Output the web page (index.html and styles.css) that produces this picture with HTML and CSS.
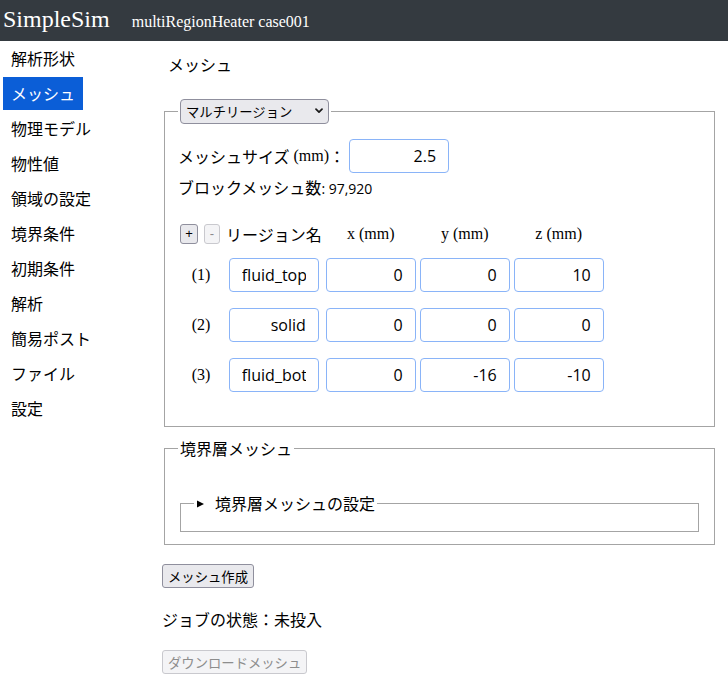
FILE: index.html
```html
<!DOCTYPE html>
<html lang="ja">
<head>
<meta charset="utf-8">
<title>SimpleSim - メッシュ</title>
<link rel="stylesheet" href="styles.css">
</head>
<body>
<header class="topbar">
  <span class="brand">SimpleSim</span>
  <span class="case-name">multiRegionHeater case001</span>
</header>
<div class="layout">
  <nav class="sidebar">
    <a class="nav-item" href="#">解析形状</a>
    <a class="nav-item active" href="#">メッシュ</a>
    <a class="nav-item" href="#">物理モデル</a>
    <a class="nav-item" href="#">物性値</a>
    <a class="nav-item" href="#">領域の設定</a>
    <a class="nav-item" href="#">境界条件</a>
    <a class="nav-item" href="#">初期条件</a>
    <a class="nav-item" href="#">解析</a>
    <a class="nav-item" href="#">簡易ポスト</a>
    <a class="nav-item" href="#">ファイル</a>
    <a class="nav-item" href="#">設定</a>
  </nav>
  <main class="content">
    <div class="page-title">メッシュ</div>

    <fieldset class="group mesh-group">
      <legend class="group-legend">
        <span class="select-wrap">
          <select class="mode-select">
            <option>マルチリージョン</option>
          </select>
          <svg class="chevron" width="8" height="6" viewBox="0 0 8 6" aria-hidden="true"><path d="M1 1.2L4 4.2L7 1.2" fill="none" stroke="#1a1a1a" stroke-width="1.7" stroke-linecap="round" stroke-linejoin="round"/></svg>
        </span>
      </legend>

      <div class="mesh-size-row">
        <span class="jp">メッシュサイズ</span><span class="unit">&nbsp;(mm)</span><span class="jp">：</span>
        <input class="num-input size-input" type="text" value="2.5">
      </div>
      <div class="block-count"><span class="jp">ブロックメッシュ数</span><span class="count-num">: 97,920</span></div>

      <table class="region-table">
        <thead>
          <tr>
            <th class="ctrl-cell"><span class="ctrl-btns"><button class="mini-btn plus" type="button">+</button><button class="mini-btn minus" type="button" disabled>-</button></span></th>
            <th class="jp name-head">リージョン名</th>
            <th>x (mm)</th>
            <th>y (mm)</th>
            <th>z (mm)</th>
          </tr>
        </thead>
        <tbody>
          <tr>
            <td class="idx">(1)</td>
            <td><input class="num-input cell-input" type="text" value="fluid_top"></td>
            <td><input class="num-input cell-input" type="text" value="0"></td>
            <td><input class="num-input cell-input" type="text" value="0"></td>
            <td><input class="num-input cell-input" type="text" value="10"></td>
          </tr>
          <tr>
            <td class="idx">(2)</td>
            <td><input class="num-input cell-input" type="text" value="solid"></td>
            <td><input class="num-input cell-input" type="text" value="0"></td>
            <td><input class="num-input cell-input" type="text" value="0"></td>
            <td><input class="num-input cell-input" type="text" value="0"></td>
          </tr>
          <tr>
            <td class="idx">(3)</td>
            <td><input class="num-input cell-input" type="text" value="fluid_bottom"></td>
            <td><input class="num-input cell-input" type="text" value="0"></td>
            <td><input class="num-input cell-input" type="text" value="-16"></td>
            <td><input class="num-input cell-input" type="text" value="-10"></td>
          </tr>
        </tbody>
      </table>
    </fieldset>

    <fieldset class="group bl-group">
      <legend class="group-legend jp text-legend">境界層メッシュ</legend>
      <fieldset class="group bl-inner">
        <legend class="group-legend jp text-legend">
          <details class="bl-details">
            <summary class="bl-summary"><svg class="disclosure" width="7" height="8" viewBox="0 0 7 8" aria-hidden="true"><path d="M0 0.5L7 4L0 7.5Z" fill="#000"/></svg><span>境界層メッシュの設定</span></summary>
          </details>
        </legend>
      </fieldset>
    </fieldset>

    <button class="btn make-btn" type="button">メッシュ作成</button>
    <div class="job-status jp">ジョブの状態：未投入</div>
    <button class="btn download-btn" type="button" disabled>ダウンロードメッシュ</button>
  </main>
</div>
</body>
</html>
```

FILE: styles.css
```css
* {
  box-sizing: border-box;
}

html,
body {
  margin: 0;
  padding: 0;
}

body {
  font-family: "Liberation Serif", "Noto Sans CJK JP", serif;
  font-size: 16px;
  color: #000;
  background: #fff;
}

.jp {
  font-family: "Noto Sans CJK JP", sans-serif;
}

/* ---------- top bar ---------- */
.topbar {
  height: 41px;
  background: #343a40;
  color: #fff;
  display: flex;
  align-items: baseline;
  padding-left: 3px;
}

.brand {
  font-size: 24px;
  line-height: 38px;
}

.case-name {
  font-size: 16px;
  margin-left: 22px;
}

/* ---------- layout ---------- */
.layout {
  display: flex;
  align-items: flex-start;
}

.sidebar {
  width: 162px;
  flex-shrink: 0;
  padding: 0 0 0 3px;
  display: flex;
  flex-direction: column;
  align-items: flex-start;
  gap: 2px;
}

.nav-item {
  display: block;
  height: 33px;
  line-height: 33px;
  padding: 0 8px;
  font-family: "Noto Sans CJK JP", sans-serif;
  font-size: 16px;
  color: #000;
  text-decoration: none;
}

.nav-item:first-child {
  margin-top: 1px;
}

.nav-item.active {
  background: #0b5ed7;
  color: #fff;
}

.content {
  flex: 1;
  min-width: 0;
  padding-right: 11px;
}

.page-title {
  margin: 12px 0 0 6px;
  line-height: 22px;
  font-family: "Noto Sans CJK JP", sans-serif;
}

/* ---------- fieldsets ---------- */
.group {
  margin: 0 2px;
  padding: 6px 13px 11px;
  border: 1px solid #a4a4a4;
  min-width: 0;
}

.group-legend {
  padding: 0 2px;
}

.text-legend {
  line-height: 22px;
}

.mesh-group {
  margin-top: 24px;
}

.select-wrap {
  position: relative;
  display: block;
}

.mode-select {
  display: block;
  appearance: none;
  -webkit-appearance: none;
  width: 149px;
  height: 25px;
  margin: 0;
  padding: 0 20px 0 5px;
  font-family: "Noto Sans CJK JP", sans-serif;
  font-size: 13.33px;
  color: #000;
  background: #e9e9ed;
  border: 1px solid #8f8f9d;
  border-radius: 4px;
}

.chevron {
  position: absolute;
  right: 6px;
  top: 9px;
  pointer-events: none;
}

.mesh-size-row {
  display: flex;
  align-items: center;
  height: 34px;
  margin-top: 9px;
}

.unit {
  font-family: "Liberation Serif", serif;
}

.num-input {
  height: 34px;
  padding: 0 12px;
  border: 1px solid #8ab4f8;
  border-radius: 4px;
  background: #fff;
  color: #000;
  font-family: "Open Sans", "Noto Sans", sans-serif;
  font-size: 16px;
  text-align: right;
  outline: none;
}

.size-input {
  width: 100px;
  margin-left: 4px;
}

.block-count {
  display: flex;
  align-items: baseline;
  height: 22px;
  margin-top: 3px;
  line-height: 22px;
}

.count-num {
  font-family: "Open Sans", sans-serif;
  font-size: 14px;
}

/* ---------- region table ---------- */
.region-table {
  margin: 19px 0 14px -1px;
  border-collapse: separate;
  border-spacing: 2px;
}

.region-table th {
  height: 30px;
  padding: 5px 1px;
  font-weight: normal;
  line-height: 20px;
  text-align: center;
  white-space: nowrap;
}

.region-table th.ctrl-cell {
  width: 44px;
  text-align: left;
}

.ctrl-btns {
  display: flex;
  gap: 6px;
  align-items: center;
}

.mini-btn {
  height: 20px;
  padding: 0;
  font-family: "Liberation Sans", sans-serif;
  font-size: 13px;
  line-height: 18px;
  color: #000;
  background: #e9e9ed;
  border: 1px solid #8f8f9d;
  border-radius: 3px;
}

.mini-btn.plus {
  width: 18px;
}

.mini-btn.minus {
  width: 16px;
}

.mini-btn:disabled {
  color: #8b8b8b;
  background: #f4f4f6;
  border-color: #c9c9ce;
}

.region-table td {
  height: 48px;
  padding: 7px 1px;
  text-align: center;
  vertical-align: middle;
}

.region-table td.idx {
  font-size: 16px;
}

.cell-input {
  display: block;
  width: 90px;
  margin: 0 auto;
}

/* ---------- boundary layer ---------- */
.bl-group {
  margin-top: 10px;
  padding-bottom: 12px;
}

.bl-inner {
  margin-top: 27px;
}

.bl-details {
  display: block;
}

.bl-summary {
  display: flex;
  align-items: center;
  height: 22px;
  list-style: none;
  cursor: pointer;
}

.bl-summary::-webkit-details-marker {
  display: none;
}

.disclosure {
  margin: 1px 11px 0 1px;
  flex-shrink: 0;
}

/* ---------- buttons / status ---------- */
.btn {
  display: block;
  height: 24px;
  padding: 0 5px;
  font-family: "Noto Sans CJK JP", sans-serif;
  font-size: 13.33px;
  color: #000;
  background: #e9e9ed;
  border: 1px solid #8f8f9d;
  border-radius: 3px;
}

.btn:disabled {
  color: #8d8d8d;
  background: #f4f4f6;
  border-color: #c9c9ce;
}

.make-btn {
  margin-top: 19px;
}

.job-status {
  margin-top: 20px;
  line-height: 22px;
}

.download-btn {
  margin-top: 20px;
}
```
